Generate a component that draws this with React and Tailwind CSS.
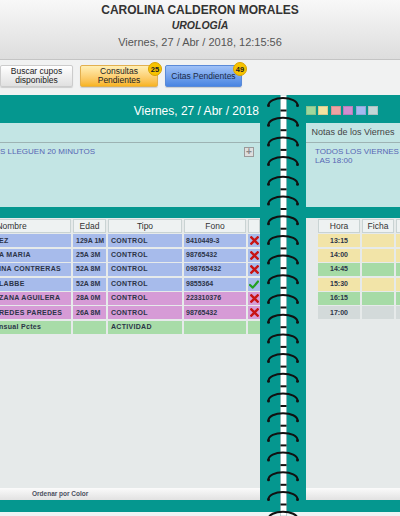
import React from "react";

const leftRows = [
  { c: "bg-[#a7bbeb]", n: "EZ", e: "129A 1M", t: "CONTROL", f: "8410449-3", a: "x" },
  { c: "bg-[#a7bbeb]", n: "A MARIA", e: "25A 3M", t: "CONTROL", f: "98765432", a: "x" },
  { c: "bg-[#a7bbeb]", n: "INA CONTRERAS", e: "52A 8M", t: "CONTROL", f: "098765432", a: "x" },
  { c: "bg-[#a7bbeb]", n: "LABBE", e: "52A 8M", t: "CONTROL", f: "9855364", a: "v" },
  { c: "bg-[#d69bd6]", n: "ZANA AGUILERA", e: "28A 0M", t: "CONTROL", f: "223310376", a: "x" },
  { c: "bg-[#d69bd6]", n: "REDES PAREDES", e: "26A 8M", t: "CONTROL", f: "98765432", a: "x" },
  { c: "bg-[#a8dca8]", n: "nsual Pctes", e: "", t: "ACTIVIDAD", f: "", a: "" },
];

const rightRows = [
  { c: "bg-[#f2e4a8]", h: "13:15" },
  { c: "bg-[#f2e4a8]", h: "14:00" },
  { c: "bg-[#a6dba6]", h: "14:45" },
  { c: "bg-[#f2e4a8]", h: "15:30" },
  { c: "bg-[#a6dba6]", h: "16:15" },
  { c: "bg-[#d3dada]", h: "17:00" },
];

function XIcon() {
  return (
    <svg width="9" height="9" viewBox="0 0 10 10">
      <path d="M1.5 1.5 L8.5 8.5 M8.5 1.5 L1.5 8.5" stroke="#c81414" strokeWidth="2.6" strokeLinecap="square" />
    </svg>
  );
}

function CheckIcon() {
  return (
    <svg width="10" height="9" viewBox="0 0 10 9">
      <path d="M1 5 L3.8 7.6 L9 1.5" stroke="#22a022" strokeWidth="2.2" fill="none" strokeLinecap="round" strokeLinejoin="round" />
    </svg>
  );
}

function Spiral() {
  const rings = Array.from({ length: 22 }, (_, i) => 2.5 + i * 19.7);
  return (
    <svg width="46" height="421" viewBox="0 0 46 421" className="absolute left-0 top-0">
      <rect x="20.5" y="0" width="6" height="421" fill="#ffffff" stroke="#8aa" strokeWidth="0.5" />
      {rings.map((y, i) => (
        <g key={i}>
          <rect x="20.5" y={y + 12} width="6" height="2" fill="#111" />
          <path d={`M8.5 ${y + 7.5} A14.5 7 0 0 1 37.5 ${y + 7.5}`} fill="none" stroke="#111" strokeWidth="2" />
          <circle cx="8.5" cy={y + 8} r="1.5" fill="#111" />
          <circle cx="37.5" cy={y + 8} r="1.5" fill="#111" />
        </g>
      ))}
    </svg>
  );
}

export default function App() {
  return (
    <div className="w-[400px] h-[516px] overflow-hidden bg-[#f1f2f2] font-['Liberation_Sans',Arial,sans-serif] text-[#333]">
      <header className="h-[60px] bg-gradient-to-b from-[#f8f8f8] to-[#dddddd] border-b border-[#c4c4c4] flex flex-col items-center">
        <div className="mt-[3px] text-[12px] font-bold leading-[14px] text-[#333]">CAROLINA CALDERON MORALES</div>
        <div className="mt-[1.5px] text-[10.5px] font-bold italic leading-[12px] text-[#333]">UROLOGÍA</div>
        <div className="mt-[4.5px] text-[11px] leading-[14px] text-[#555]">Viernes, 27 / Abr / 2018, 12:15:56</div>
      </header>

      <div className="h-[35px] flex items-start pt-[5px] gap-[7px]">
        <div className="w-[73px] h-[22px] shrink-0 bg-gradient-to-b from-white to-[#e0e0e0] border border-[#cccccc] rounded-[2px] shadow-[0_1px_1px_rgba(0,0,0,0.15)] flex flex-col items-center justify-center text-[8.5px] leading-[9px] text-[#222]">
          <span>Buscar cupos</span>
          <span>disponibles</span>
        </div>
        <div className="relative w-[78px] h-[22px] shrink-0 bg-gradient-to-b from-[#ffefb4] to-[#f8b41c] border border-[#e2b050] rounded-[2px] shadow-[0_1px_1px_rgba(0,0,0,0.15)] flex flex-col items-center justify-center text-[8.5px] leading-[9px] text-[#222]">
          <span>Consultas</span>
          <span>Pendientes</span>
          <span className="absolute left-[67px] top-[-4px] w-[14px] h-[14px] rounded-full bg-[#f7c300] border border-[#d9a300] flex items-center justify-center text-[7.5px] font-bold text-[#222]">25</span>
        </div>
        <div className="relative w-[77px] h-[22px] shrink-0 bg-gradient-to-b from-[#9fc1f7] to-[#4a85e2] border border-[#5a8ad8] rounded-[2px] shadow-[0_1px_1px_rgba(0,0,0,0.15)] flex items-center justify-center text-[8.5px] leading-[9px] text-[#1d2a44]">
          <span>Citas Pendientes</span>
          <span className="absolute left-[67px] top-[-4px] w-[14px] h-[14px] rounded-full bg-[#f7c300] border border-[#d9a300] flex items-center justify-center text-[7.5px] font-bold text-[#222]">49</span>
        </div>
      </div>

      <div className="h-[421px] flex bg-[#05978f]">
        {/* Left page */}
        <div className="w-[308px] -ml-[48px] shrink-0 flex flex-col">
          <div className="h-[28px] flex items-center justify-end pt-[3px] pr-[1px] text-white text-[12px]">
            Viernes, 27 / Abr / 2018
          </div>
          <div className="h-[84px] bg-[#c3e5e4] flex flex-col">
            <div className="h-[20px] border-b border-[#9db3b3]"></div>
            <div className="flex justify-between items-start pt-[4px]">
              <div className="pl-[48px] text-[8px] leading-[9px] text-[#5766b4] whitespace-nowrap">S LLEGUEN 20 MINUTOS</div>
              <div className="mr-[6px] -mt-[0.5px] w-[10px] h-[10px] border border-[#9a9a9a] bg-[#dedede] flex items-center justify-center text-[#888] text-[10px] leading-none font-bold">+</div>
            </div>
          </div>
          <div className="h-[11px]"></div>
          <div className="flex-1 bg-[#e6eaea] pt-[1px]">
            <div className="grid grid-cols-[119px_33px_74px_62px_12px] gap-x-[2px] gap-y-[1.4px]">
              <div className="h-[14px] bg-[#eef2f2] border border-[#c9d3d3] flex items-center justify-center text-[8.5px]">Nombre</div>
              <div className="h-[14px] bg-[#eef2f2] border border-[#c9d3d3] flex items-center justify-center text-[8.5px]">Edad</div>
              <div className="h-[14px] bg-[#eef2f2] border border-[#c9d3d3] flex items-center justify-center text-[8.5px]">Tipo</div>
              <div className="h-[14px] bg-[#eef2f2] border border-[#c9d3d3] flex items-center justify-center text-[8.5px]">Fono</div>
              <div className="h-[14px] bg-[#eef2f2] border border-[#c9d3d3]"></div>
              {leftRows.map((r, i) => (
                <React.Fragment key={i}>
                  <div className={`h-[13px] ${r.c} flex items-center pl-[47px] text-[7px] font-bold tracking-[0.3px] text-[#2c3448] whitespace-nowrap overflow-hidden`}>{r.n}</div>
                  <div className={`h-[13px] ${r.c} flex items-center pl-[3px] text-[7px] font-bold text-[#2c3448] whitespace-nowrap`}>{r.e}</div>
                  <div className={`h-[13px] ${r.c} flex items-center pl-[3px] text-[7px] font-bold tracking-[0.3px] text-[#2c3448]`}>{r.t}</div>
                  <div className={`h-[13px] ${r.c} flex items-center pl-[2px] text-[7px] font-bold text-[#2c3448]`}>{r.f}</div>
                  <div className={`h-[13px] ${r.c} flex items-center justify-center`}>
                    {r.a === "x" ? <XIcon /> : r.a === "v" ? <CheckIcon /> : null}
                  </div>
                </React.Fragment>
              ))}
            </div>
          </div>
          <div className="h-[12px] bg-gradient-to-b from-[#fbfbfb] to-[#e2e2e2] flex items-center pl-[80px] text-[6.5px] font-bold text-[#4a5060]">
            Ordenar por Color
          </div>
          <div className="h-[12px]"></div>
          <div className="h-[4px] bg-[#eef4f4]"></div>
        </div>

        {/* Spiral */}
        <div className="relative w-[46px] shrink-0 flex flex-col">
          <div className="flex-1"></div>
          <div className="h-[4px] bg-[#eef4f4]"></div>
          <Spiral />
        </div>

        {/* Right page */}
        <div className="flex-1 min-w-0 overflow-hidden flex flex-col">
          <div className="h-[28px] flex items-start pt-[11px] gap-[2.4px]">
            <span className="w-[10px] h-[9px] bg-[#9cd89c] border border-black/10"></span>
            <span className="w-[10px] h-[9px] bg-[#f2e3a0] border border-black/10"></span>
            <span className="w-[10px] h-[9px] bg-[#eea3a3] border border-black/10"></span>
            <span className="w-[10px] h-[9px] bg-[#d08ed0] border border-black/10"></span>
            <span className="w-[10px] h-[9px] bg-[#a3baf0] border border-black/10"></span>
            <span className="w-[10px] h-[9px] bg-[#c2d6d6] border border-black/10"></span>
          </div>
          <div className="h-[84px] bg-[#c3e5e4] flex flex-col">
            <div className="h-[20px] border-b border-[#9db3b3] flex items-center pt-[1px] pl-[5.5px] text-[9px] text-[#444] whitespace-nowrap">
              Notas de los Viernes
            </div>
            <div className="pl-[9px] pt-[4px] text-[8px] leading-[9px] text-[#5766b4] whitespace-nowrap">
              <div>TODOS LOS VIERNES TENEMOS REUNIÓN A</div>
              <div>LAS 18:00</div>
            </div>
          </div>
          <div className="h-[11px]"></div>
          <div className="flex-1 bg-[#e6eaea] pt-[1px] pl-[12px]">
            <div className="grid grid-cols-[42px_32px_40px] gap-x-[2px] gap-y-[1.4px]">
              <div className="h-[14px] bg-[#eef2f2] border border-[#c9d3d3] flex items-center justify-center text-[8.5px]">Hora</div>
              <div className="h-[14px] bg-[#eef2f2] border border-[#c9d3d3] flex items-center justify-center text-[8.5px]">Ficha</div>
              <div className="h-[14px] bg-[#eef2f2] border border-[#c9d3d3]"></div>
              {rightRows.map((r, i) => (
                <React.Fragment key={i}>
                  <div className={`h-[13px] ${r.c} flex items-center justify-center text-[7px] font-bold text-[#2c3448]`}>{r.h}</div>
                  <div className={`h-[13px] ${r.c}`}></div>
                  <div className={`h-[13px] ${r.c}`}></div>
                </React.Fragment>
              ))}
            </div>
          </div>
          <div className="h-[12px] bg-gradient-to-b from-[#fbfbfb] to-[#e2e2e2]"></div>
          <div className="h-[12px]"></div>
          <div className="h-[4px] bg-[#eef4f4]"></div>
        </div>
      </div>
    </div>
  );
}
